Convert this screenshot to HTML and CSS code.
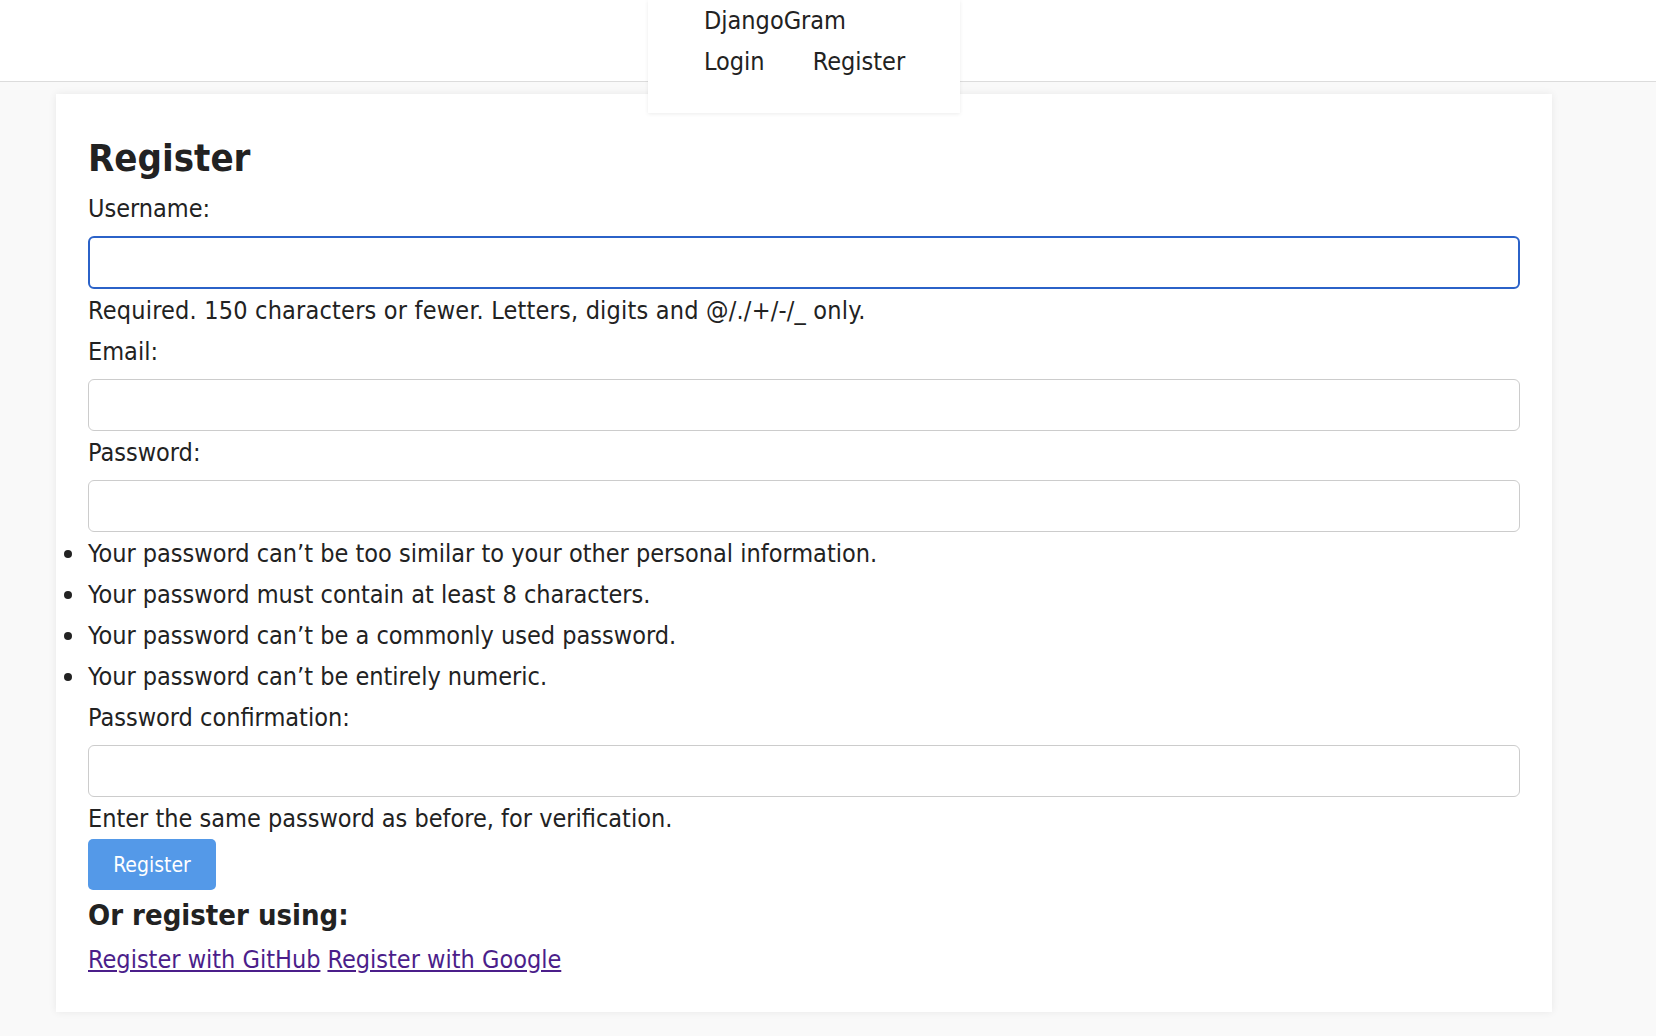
FILE: index.html
```html
<!DOCTYPE html>
<html lang="en">
<head>
<meta charset="utf-8">
<title>Register - DjangoGram</title>
<link rel="stylesheet" href="styles.css">
</head>
<body>
<header class="site-header">
  <nav class="nav-box">
    <div class="brand">DjangoGram</div>
    <div class="nav-links">
      <a class="nav-link" href="#">Login</a>
      <a class="nav-link" href="#">Register</a>
    </div>
  </nav>
</header>
<main class="card">
  <h2 class="title">Register</h2>
  <form class="form">
    <label class="label" for="u">Username:</label>
    <input class="input input-focus" id="u" type="text">
    <div class="help help-wide">Required. 150 characters or fewer. Letters, digits and @/./+/-/_ only.</div>
    <label class="label" for="e">Email:</label>
    <input class="input" id="e" type="text">
    <label class="label" for="p">Password:</label>
    <input class="input" id="p" type="text">
    <ul class="rules">
      <li>Your password can’t be too similar to your other personal information.</li>
      <li>Your password must contain at least 8 characters.</li>
      <li>Your password can’t be a commonly used password.</li>
      <li>Your password can’t be entirely numeric.</li>
    </ul>
    <label class="label" for="p2">Password confirmation:</label>
    <input class="input" id="p2" type="text">
    <div class="help">Enter the same password as before, for verification.</div>
    <button class="btn" type="button">Register</button>
  </form>
  <h3 class="subtitle">Or register using:</h3>
  <div class="social">
    <a class="social-link" href="#">Register with GitHub</a>
    <a class="social-link" href="#">Register with Google</a>
  </div>
</main>
</body>
</html>
```
FILE: styles.css
```css
html, body {
  margin: 0;
  padding: 0;
}
body {
  background: #f9f9f9;
  color: #222;
  font-family: "DejaVu Sans Condensed", "DejaVu Sans", sans-serif;
  font-stretch: condensed;
  font-size: 25px;
  line-height: 41px;
  min-height: 1036px;
}
.site-header {
  position: relative;
  height: 81px;
  background: #fff;
  border-bottom: 1px solid #dcdcdc;
}
.nav-box {
  position: absolute;
  left: 648px;
  top: 0;
  width: 312px;
  box-sizing: border-box;
  padding: 0 56px 31px;
  background: #fff;
  box-shadow: 0 1px 4px rgba(0, 0, 0, 0.08);
  z-index: 2;
}
.brand {
  color: #222;
}
.nav-links {
  display: flex;
  gap: 48px;
}
.nav-link {
  color: #222;
  text-decoration: none;
}
.card {
  display: block;
  margin: 12px 0 0 56px;
  width: 1496px;
  box-sizing: border-box;
  padding: 34px 32px 32px;
  background: #fff;
  box-shadow: 0 0 8px rgba(0, 0, 0, 0.07);
}
.title {
  margin: 0;
  font-size: 38px;
  line-height: 60px;
  font-weight: bold;
  color: #222;
}
.form {
  display: flex;
  flex-direction: column;
  align-items: flex-start;
}
.label, .help {
  display: block;
}
.help-wide {
  letter-spacing: 0.2px;
}
.input {
  display: block;
  width: 100%;
  height: 52px;
  box-sizing: border-box;
  margin: 7px 0 1px;
  border: 1px solid #cccccc;
  border-radius: 6px;
  background: #fff;
  font: inherit;
  padding: 0 12px;
  outline: none;
}
.input-focus {
  height: 53px;
  margin-bottom: 1px;
  border: 2px solid #2b62c8;
}
.rules {
  margin: 0;
  padding: 0;
  list-style: none;
}
.rules li {
  position: relative;
}
.rules li::before {
  content: "";
  position: absolute;
  left: -24px;
  top: 17px;
  width: 8px;
  height: 8px;
  border-radius: 50%;
  background: #222;
}
.btn {
  width: 128px;
  height: 51px;
  border: none;
  border-radius: 5px;
  background: #5499e8;
  color: #fff;
  font-family: inherit;
  font-stretch: condensed;
  font-size: 21px;
  padding: 0;
  margin: 0;
}
.subtitle {
  margin: 1px 0 0;
  font-size: 29px;
  line-height: 48px;
  font-weight: bold;
  color: #222;
}
.social {
  display: flex;
  gap: 7px;
}
.social-link {
  color: #4b1e8a;
  text-decoration: underline;
}
```
